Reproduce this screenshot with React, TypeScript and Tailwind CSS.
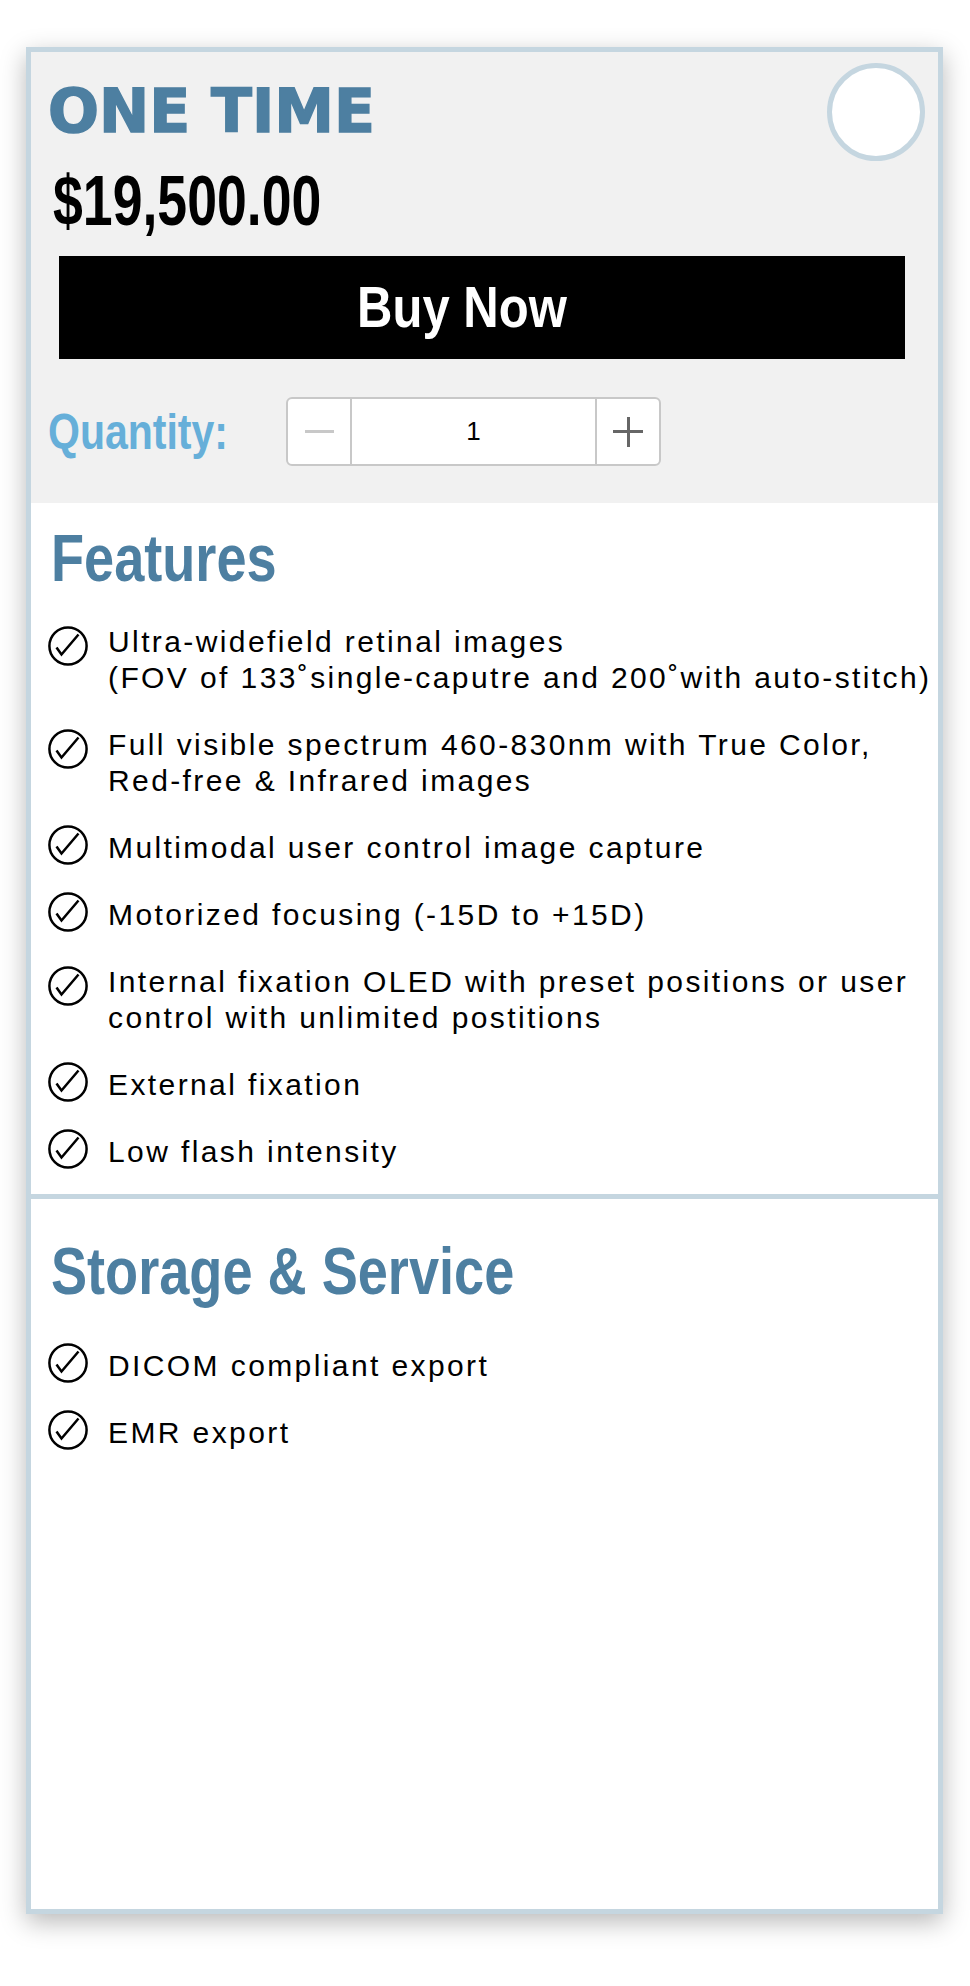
import React from 'react';

const bold = "font-['Liberation_Sans',Arial,sans-serif] font-bold";

function CheckIcon({ offset }: { offset: string }) {
    return (
        <svg viewBox="0 0 40 40" className={`w-[40px] h-[40px] shrink-0 ${offset}`}>
            <circle cx="20" cy="20" r="18.6" fill="none" stroke="#000" strokeWidth="2.5" />
            <path d="M8.5 21.5 L13.5 28.5 L30.5 8.5" fill="none" stroke="#000" strokeWidth="2.5" strokeLinejoin="miter" />
        </svg>
    );
}

function Item({ lines }: { lines: string[] }) {
    const offset = lines.length > 1 ? 'mt-[2px]' : 'mt-[-5px]';
    return (
        <li className="flex items-start">
            <CheckIcon offset={offset} />
            <div className="ml-[20px] text-[30px] leading-[36px] tracking-[2.4px] text-black whitespace-nowrap">
                {lines.map((l, i) => (
                    <div key={i}>{l}</div>
                ))}
            </div>
        </li>
    );
}

const features: string[][] = [
    ['Ultra-widefield retinal images', '(FOV of 133˚single-caputre and 200˚with auto-stitch)'],
    ['Full visible spectrum 460-830nm with True Color,', 'Red-free & Infrared images'],
    ['Multimodal user control image capture'],
    ['Motorized focusing (-15D to +15D)'],
    ['Internal fixation OLED with preset positions or user', 'control with unlimited postitions'],
    ['External fixation'],
    ['Low flash intensity'],
];

const storage: string[][] = [['DICOM compliant export'], ['EMR export']];

export default function App() {
    return (
        <div className="min-h-[1986px] bg-white pl-[26px] pt-[47px] font-['Liberation_Sans',Arial,sans-serif]">
            <div className="w-[917px] h-[1867px] border-[5px] border-[#c5d6e0] bg-white shadow-[0_8px_24px_rgba(0,0,0,0.28)] flex flex-col">
                {/* pricing header */}
                <section className="relative h-[451px] bg-[#f1f1f1] pl-[17px] pt-[29px]">
                    <div className="absolute top-[11px] right-[13px] w-[98px] h-[98px] rounded-full border-[5px] border-[#c5d6e0] bg-white" />
                    <h1 className="font-['DejaVu_Sans',sans-serif] font-bold text-[60px] leading-[60px] text-[#4d7fa1] [-webkit-text-stroke:1.5px_#4d7fa1]">
                        ONE TIME
                    </h1>
                    <div className={`mt-[25px] ml-[5px] h-[70px] ${bold}`}>
                        <span className="inline-block origin-left scale-x-[0.766] text-[70px] leading-[70px] text-black">$19,500.00</span>
                    </div>
                    <button className={`mt-[20px] ml-[11px] w-[846px] h-[103px] bg-black text-white pr-[40px] flex items-center justify-center ${bold}`}>
                        <span className="inline-block origin-center scale-x-[0.86] text-[57px] leading-[57px]">Buy Now</span>
                    </button>
                    <div className="mt-[38px] h-[69px] flex items-center">
                        <div className="w-[238px]">
                            <span className={`inline-block origin-left scale-x-[0.82] text-[50px] leading-[50px] text-[#66afd9] ${bold}`}>Quantity:</span>
                        </div>
                        <div className="w-[375px] h-[69px] border-2 border-[#c8c8c8] rounded-[6px] bg-white flex overflow-hidden">
                            <div className="w-[64px] border-r-2 border-[#c8c8c8] flex items-center justify-center">
                                <div className="w-[29px] h-[3px] bg-[#c8c8c8]" />
                            </div>
                            <div className="flex-1 flex items-center justify-center text-[26px] text-black">1</div>
                            <div className="w-[64px] border-l-2 border-[#c8c8c8] flex items-center justify-center">
                                <div className="relative w-[30px] h-[30px]">
                                    <div className="absolute left-0 top-[13.5px] w-[30px] h-[3px] bg-[#666]" />
                                    <div className="absolute top-0 left-[13.5px] w-[3px] h-[30px] bg-[#666]" />
                                </div>
                            </div>
                        </div>
                    </div>
                </section>

                {/* features */}
                <section className="h-[696px] border-b-[5px] border-[#c5d6e0] pl-[17px] pt-[22px]">
                    <h2 className={`ml-[3px] text-[66px] leading-[66px] text-[#4d7fa1] ${bold}`}>
                        <span className="inline-block origin-left scale-x-[0.82]">Features</span>
                    </h2>
                    <ul className="mt-[33px] flex flex-col gap-[31px]">
                        {features.map((f, i) => (
                            <Item key={i} lines={f} />
                        ))}
                    </ul>
                </section>

                {/* storage */}
                <section className="flex-1 pl-[17px] pt-[39px]">
                    <h2 className={`ml-[3px] text-[66px] leading-[66px] text-[#4d7fa1] ${bold}`}>
                        <span className="inline-block origin-left scale-x-[0.82] whitespace-nowrap">Storage &amp; Service</span>
                    </h2>
                    <ul className="mt-[44px] flex flex-col gap-[31px]">
                        {storage.map((f, i) => (
                            <Item key={i} lines={f} />
                        ))}
                    </ul>
                </section>
            </div>
        </div>
    );
}
